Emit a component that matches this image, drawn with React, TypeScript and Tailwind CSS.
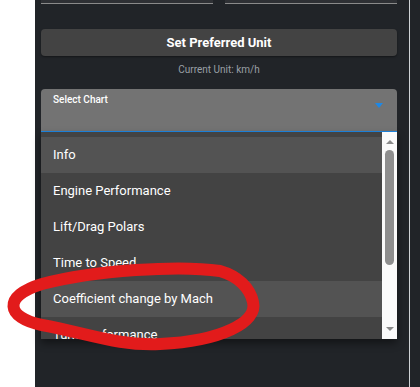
export default function App() {
  const items = [
    { label: "Info", active: true },
    { label: "Engine Performance", active: false },
    { label: "Lift/Drag Polars", active: false },
    { label: "Time to Speed", active: false },
    { label: "Coefficient change by Mach", active: true },
    { label: "Turn Performance", active: false },
  ];

  return (
    <div className="relative flex h-[387px] w-[420px] overflow-hidden bg-white font-['Roboto',sans-serif]">
      {/* white gutter */}
      <div className="w-[35px] shrink-0 bg-white" />

      {/* side panel */}
      <div className="flex w-[374px] shrink-0 flex-col bg-[#212428] pl-[6px] pr-[12px]">
        <div className="flex gap-[12px]">
          <div className="h-[4px] flex-1 border-b border-[#8a8a8a] bg-[#2e3034]" />
          <div className="h-[4px] flex-1 border-b border-[#8a8a8a] bg-[#2e3034]" />
        </div>

        <button className="mt-[25px] h-[27px] rounded-[4px] bg-[#434343] text-[13px] font-bold text-white shadow-[0_1px_2px_rgba(0,0,0,0.4)]">
          Set Preferred Unit
        </button>

        <p className="mt-[8px] text-center text-[10px] leading-[12px] text-[#9aa0a6]">
          Current Unit: km/h
        </p>

        <div className="mt-[13px] h-[43px] rounded-t-[4px] border-b border-[#1e88e5] bg-[#737373] px-[12px] pt-[5px]">
          <div className="flex justify-between">
            <span className="text-[10px] font-medium leading-[12px] text-white">Select Chart</span>
            <svg width="8" height="5" viewBox="0 0 8 5" className="mt-[9px] mr-[2px]">
              <path d="M0 0 L8 0 L4 5 Z" fill="#1e88e5" />
            </svg>
          </div>
        </div>

        <div className="flex h-[207px] overflow-hidden bg-[#434343] shadow-[0_4px_8px_rgba(0,0,0,0.45)]">
          <div className="flex-1 overflow-hidden pt-[5px]">
            {items.map((it) => (
              <div
                key={it.label}
                className={`flex h-[36px] items-center px-[12px] text-[13px] text-white ${it.active ? "bg-[#535353]" : ""}`}
              >
                {it.label}
              </div>
            ))}
          </div>
          <div className="flex w-[15px] flex-col items-center bg-[#fafafa] pt-[8px]">
            <svg width="8" height="4" viewBox="0 0 8 4">
              <path d="M0 4 L8 4 L4 0 Z" fill="#8a8a8a" />
            </svg>
            <div className="mt-[6px] h-[115px] w-[9px] rounded-full bg-[#8e8e8e]" />
            <svg width="8" height="4" viewBox="0 0 8 4" className="mt-[62px]">
              <path d="M0 0 L8 0 L4 4 Z" fill="#8a8a8a" />
            </svg>
          </div>
        </div>
      </div>

      {/* divider */}
      <div className="w-px shrink-0 bg-[#cfd3d6]" />
      <div className="flex-1 bg-[#212428]" />

      {/* red hand-drawn annotation */}
      <svg className="pointer-events-none absolute left-0 top-0" width="420" height="387" viewBox="0 0 420 387">
        <path
          d="M220 271 C180 265, 95 270, 42 284 C2 296, 6 318, 42 325 C90 334, 118 346, 160 344 C222 341, 258 322, 253 302 C250 288, 238 276, 220 271"
          fill="none"
          stroke="#e21b1b"
          strokeWidth="12"
          strokeLinecap="round"
          strokeLinejoin="round"
        />
      </svg>
    </div>
  );
}
